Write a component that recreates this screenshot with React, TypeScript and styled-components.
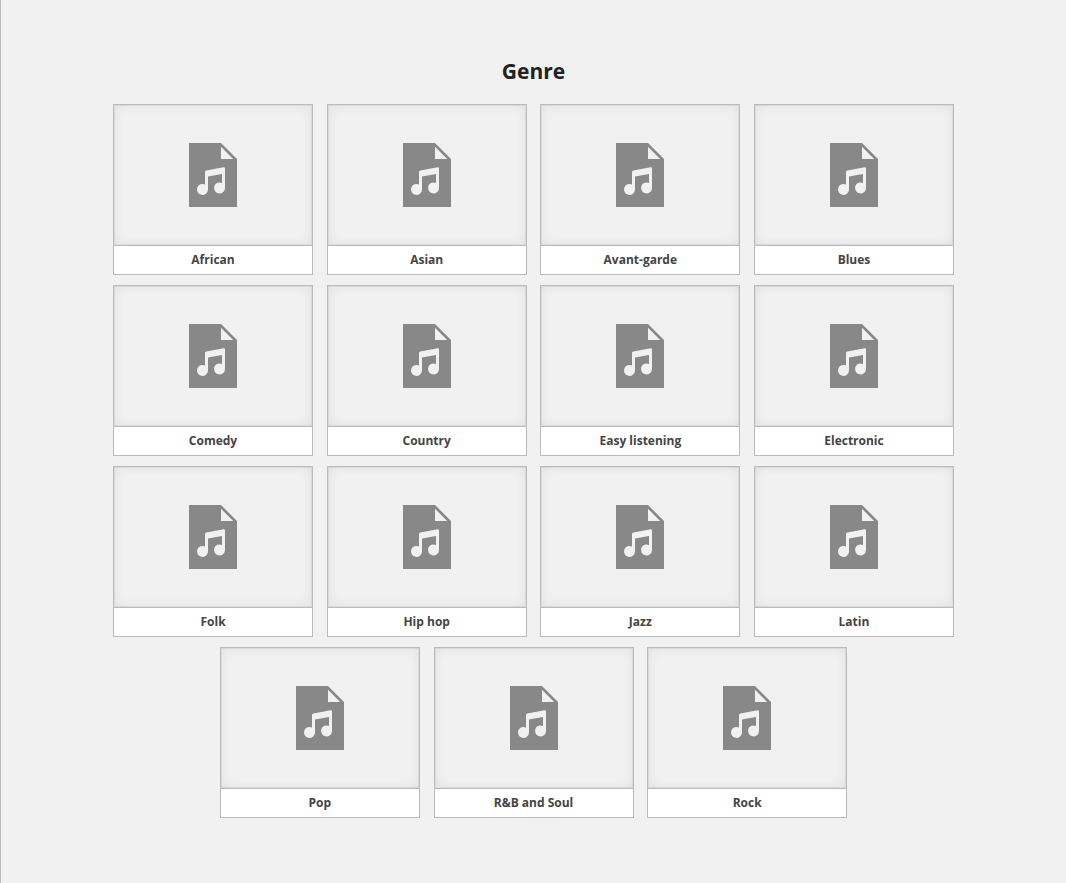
import React from "react";
import styled, { createGlobalStyle } from "styled-components";

const GlobalStyle = createGlobalStyle`
  *, *::before, *::after { box-sizing: border-box; }
  body {
    margin: 0;
    background: #f1f1f1;
    font-family: "Open Sans", sans-serif;
  }
`;

const Page = styled.main`
  min-height: 883px;
  padding-top: 56px;
  border-left: 1px solid #bbb;
`;

const Title = styled.h1`
  margin: 0 0 18px;
  color: #222;
  font-size: 21px;
  font-weight: 700;
  line-height: 30px;
  text-align: center;
`;

const Grid = styled.ul`
  display: flex;
  flex-wrap: wrap;
  justify-content: center;
  gap: 10px 13.66px;
  width: 860px;
  margin: 0 auto;
  padding: 0;
  list-style: none;
`;

const Card = styled.li`
  width: 200px;
  height: 171px;
  border: 1px solid #bbb;
  background: #fff;
`;

const Preview = styled.div`
  display: flex;
  align-items: center;
  justify-content: center;
  height: 141px;
  border-bottom: 1px solid #bbb;
  background: #f1f1f1;
  box-shadow: inset 0 0 12px rgba(0, 0, 0, 0.08), inset 0 0 0 1px rgba(0, 0, 0, 0.05);
`;

const Label = styled.div`
  color: #444;
  font-size: 12px;
  font-weight: 700;
  line-height: 28px;
  text-align: center;
`;

const Icon = styled.svg`
  display: block;
  width: 48px;
  height: 64px;
  fill: #888;
`;

const AudioIcon = () => (
  <Icon viewBox="0 0 48 64" aria-hidden="true">
    <path d="M0 0H32L48 16V64H0Z" />
    <path fill="#f1f1f1" d="M32 3.8V16H44.2Z" />
    <path
      fill="#f1f1f1"
      d="M17.4 27.4L34.6 24.3Q36 24.1 36 25.4V45.2A5.5 5.5 0 1 1 33 40V31L19 33.5V46.7A5.5 5.5 0 1 1 16 41.5V29Q16 27.7 17.4 27.4Z"
    />
  </Icon>
);

const genres = [
  "African", "Asian", "Avant-garde", "Blues",
  "Comedy", "Country", "Easy listening", "Electronic",
  "Folk", "Hip hop", "Jazz", "Latin",
  "Pop", "R&B and Soul", "Rock",
];

export default function App() {
  return (
    <>
      <GlobalStyle />
      <Page>
        <Title>Genre</Title>
        <Grid>
          {genres.map((genre) => (
            <Card key={genre}>
              <Preview>
                <AudioIcon />
              </Preview>
              <Label>{genre}</Label>
            </Card>
          ))}
        </Grid>
      </Page>
    </>
  );
}
